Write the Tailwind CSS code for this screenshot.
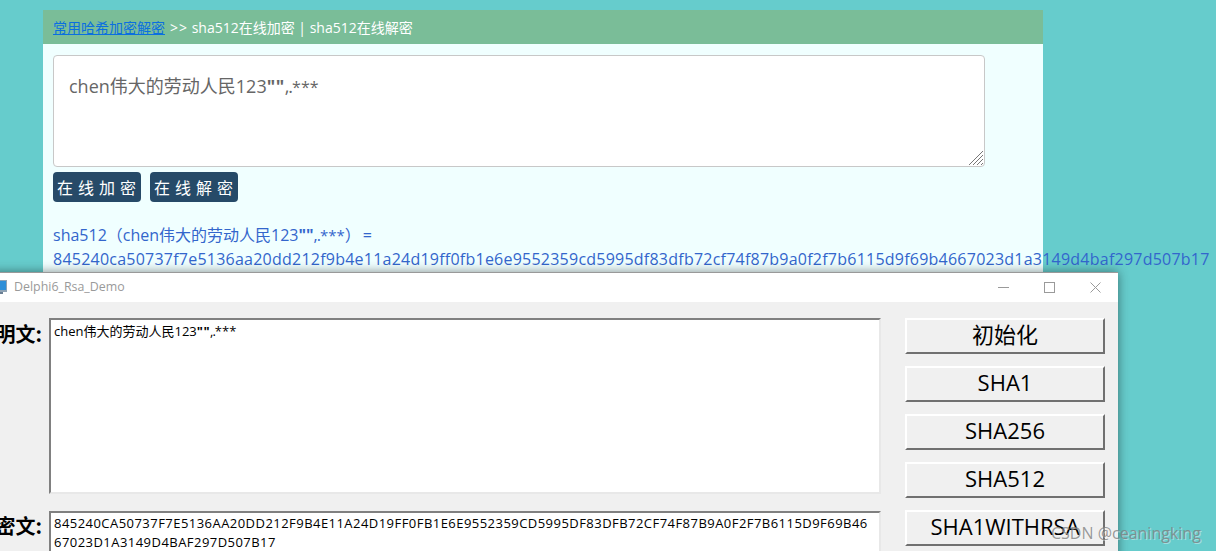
<!DOCTYPE html>
<html lang="zh-CN">

<head>
  <meta charset="UTF-8" />
  <title>sha512</title>
  <script src="https://cdn.jsdelivr.net/npm/@tailwindcss/browser@4"></script>
</head>

<body class="relative h-[551px] w-[1216px] overflow-hidden bg-[#66cccc] font-['Open_Sans','Noto_Sans_CJK_SC',sans-serif]">
  <!-- web page behind -->
  <section class="absolute left-[43px] top-[10px] h-[270px] w-[1000px] bg-[#f0ffff]">
    <div class="flex h-[34px] items-center bg-[#7abd98] pl-[10px] text-[14px] text-white">
      <a class="text-[#0a6fe0] underline">常用哈希加密解密</a>
      <span class="ml-[5px] whitespace-pre"><span class="tracking-[1px]">&gt;&gt;</span> sha512在线加密 | sha512在线解密</span>
    </div>
    <div class="px-[10px] pt-[11px]">
      <div class="relative h-[112px] w-[932px] rounded-[4px] border border-[#c8c8c8] bg-white px-[15px] py-[16px] text-[18px] leading-[28px] text-[#666666]">
        chen伟大的劳动人民123<span class="font-bold tracking-[0.5px]">""</span><span class="tracking-[-1px]">,.</span><span class="text-[16px]">***</span>
        <svg class="absolute bottom-0 right-0" width="16" height="16" viewBox="0 0 16 16" fill="none" stroke="#777777">
          <path d="M1 15 15 1M5 15 15 5M9 15 15 9M13 15 15 13" />
        </svg>
      </div>
      <div class="mt-[5px] flex gap-[9px]">
        <button class="h-[30px] w-[88px] whitespace-nowrap rounded-[4px] bg-[#264a68] pl-[4px] pt-[1px] text-left text-[16px] tracking-[5px] text-white">在线加密</button>
        <button class="h-[30px] w-[88px] whitespace-nowrap rounded-[4px] bg-[#264a68] pl-[4px] pt-[1px] text-left text-[16px] tracking-[5px] text-white">在线解密</button>
      </div>
      <p class="mt-[21px] whitespace-nowrap text-[16px] leading-[24px] text-[#3366cc]">sha512（chen伟大的劳动人民123<span class="font-bold">""</span><span class="tracking-[-1px]">,.</span><span class="text-[15px]">***</span>）<span class="ml-[2px]">=</span></p>
      <p class="whitespace-nowrap text-[16px] leading-[24px] tracking-[0.234px] text-[#3366cc]">845240ca50737f7e5136aa20dd212f9b4e11a24d19ff0fb1e6e9552359cd5995df83dfb72cf74f87b9a0f2f7b6115d9f69b4667023d1a3149d4baf297d507b17</p>
    </div>
  </section>

  <!-- delphi window -->
  <section class="absolute left-[-10px] top-[272px] h-[290px] w-[1128px] border-t border-[#999999] bg-[#f0f0f0] shadow-[0_0_10px_rgba(0,0,0,0.45)]">
    <header class="flex h-[29px] items-center justify-between bg-white pr-[17px]">
      <div class="flex items-center gap-[7px]">
        <svg width="17" height="14" viewBox="0 0 17 14">
          <rect x="0" y="0" width="17" height="12" fill="#8fa3b5" />
          <rect x="1" y="1" width="15" height="9" fill="#2f8fd8" />
          <rect x="4" y="12" width="9" height="2" fill="#6a7f94" />
        </svg>
        <span class="text-[12.4px] text-[#9a9a9a]">Delphi6_Rsa_Demo</span>
      </div>
      <div class="flex items-center gap-[35px]">
        <svg width="11" height="11" viewBox="0 0 11 11" stroke="#9a9a9a" fill="none"><path d="M0 5.5h11" /></svg>
        <svg width="11" height="11" viewBox="0 0 11 11" stroke="#9a9a9a" fill="none"><rect x="0.5" y="0.5" width="10" height="10" /></svg>
        <svg width="11" height="11" viewBox="0 0 11 11" stroke="#9a9a9a" fill="none"><path d="M0.5 0.5l10 10M10.5 0.5l-10 10" /></svg>
      </div>
    </header>
    <div class="flex pt-[16px]">
      <div class="w-[59px] shrink-0 text-right font-['Noto_Sans_CJK_SC'] text-[20px] font-bold text-black">
        <p class="mr-[7px] mt-[1px] h-[192px] whitespace-nowrap leading-[30px]">明文:</p>
        <p class="mr-[7px] whitespace-nowrap leading-[30px]">密文:</p>
      </div>
      <div class="w-[832px] shrink-0">
        <div class="h-[176px] border-2 border-b-[#e8e8e8] border-l-[#808080] border-r-[#e8e8e8] border-t-[#808080] bg-white px-[3px] py-[3px] text-[13px] leading-[17px] text-black">chen伟大的劳动人民123<span class="font-bold tracking-[0.5px]">""</span><span class="tracking-[-1px]">,.</span>***</div>
        <div class="mt-[17px] h-[60px] border-2 border-b-[#e8e8e8] border-l-[#808080] border-r-[#e8e8e8] border-t-[#808080] bg-white px-[3px] pt-[1px] text-[13px] leading-[19px] tracking-[0.46px] text-black">
          <div class="whitespace-nowrap">845240CA50737F7E5136AA20DD212F9B4E11A24D19FF0FB1E6E9552359CD5995DF83DFB72CF74F87B9A0F2F7B6115D9F69B46</div>
          <div>67023D1A3149D4BAF297D507B17</div>
        </div>
      </div>
      <div class="ml-[24px] flex w-[200px] flex-col gap-[12px] text-[22px] leading-none text-black">
        <button class="flex h-[36px] items-center justify-center border-2 border-b-[#707070] border-l-white border-r-[#707070] border-t-white pb-[5px]">初始化</button>
        <button class="flex h-[36px] items-center justify-center border-2 border-b-[#707070] border-l-white border-r-[#707070] border-t-white pb-[5px]">SHA1</button>
        <button class="flex h-[36px] items-center justify-center border-2 border-b-[#707070] border-l-white border-r-[#707070] border-t-white pb-[5px]">SHA256</button>
        <button class="flex h-[36px] items-center justify-center border-2 border-b-[#707070] border-l-white border-r-[#707070] border-t-white pb-[5px]">SHA512</button>
        <button class="flex h-[36px] items-center justify-center border-2 border-b-[#707070] border-l-white border-r-[#707070] border-t-white pb-[5px]">SHA1WITHRSA</button>
      </div>
    </div>
  </section>

  <!-- watermark -->
  <span class="absolute left-[1051px] top-[521px] text-[16px] text-[#808080]/80 [text-shadow:1px_1px_0_rgba(255,255,255,0.4)]">CSDN @ceaningking</span>
</body>

</html>
